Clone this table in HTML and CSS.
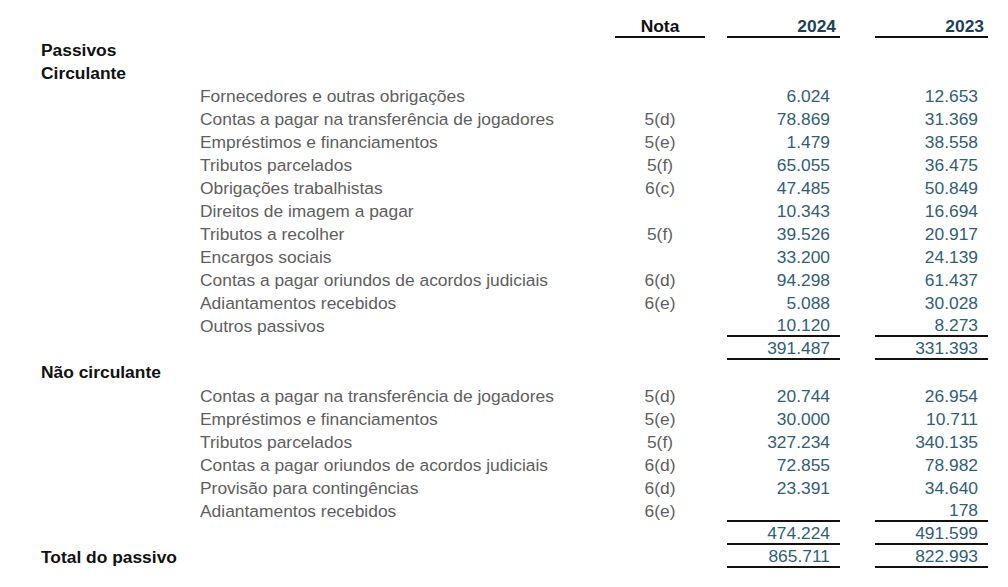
FILE: index.html
```html
<!DOCTYPE html>
<html lang="pt-BR">
<head>
<meta charset="utf-8">
<title>Passivos</title>
<link rel="stylesheet" href="styles.css">
</head>
<body>
<div class="sheet">
  <div class="row head">
    <div class="label"></div>
    <div class="nota ul">Nota</div>
    <div class="val v1 ul year">2024</div>
    <div class="val v2 ul year">2023</div>
  </div>
  <div class="row"><div class="label sec">Passivos</div></div>
  <div class="row"><div class="label sec">Circulante</div></div>
  <div class="row"><div class="label item">Fornecedores e outras obrigações</div><div class="nota"></div><div class="val v1">6.024</div><div class="val v2">12.653</div></div>
  <div class="row"><div class="label item">Contas a pagar na transferência de jogadores</div><div class="nota">5(d)</div><div class="val v1">78.869</div><div class="val v2">31.369</div></div>
  <div class="row"><div class="label item">Empréstimos e financiamentos</div><div class="nota">5(e)</div><div class="val v1">1.479</div><div class="val v2">38.558</div></div>
  <div class="row"><div class="label item">Tributos parcelados</div><div class="nota">5(f)</div><div class="val v1">65.055</div><div class="val v2">36.475</div></div>
  <div class="row"><div class="label item">Obrigações trabalhistas</div><div class="nota">6(c)</div><div class="val v1">47.485</div><div class="val v2">50.849</div></div>
  <div class="row"><div class="label item">Direitos de imagem a pagar</div><div class="nota"></div><div class="val v1">10.343</div><div class="val v2">16.694</div></div>
  <div class="row"><div class="label item">Tributos a recolher</div><div class="nota">5(f)</div><div class="val v1">39.526</div><div class="val v2">20.917</div></div>
  <div class="row"><div class="label item">Encargos sociais</div><div class="nota"></div><div class="val v1">33.200</div><div class="val v2">24.139</div></div>
  <div class="row"><div class="label item">Contas a pagar oriundos de acordos judiciais</div><div class="nota">6(d)</div><div class="val v1">94.298</div><div class="val v2">61.437</div></div>
  <div class="row"><div class="label item">Adiantamentos recebidos</div><div class="nota">6(e)</div><div class="val v1">5.088</div><div class="val v2">30.028</div></div>
  <div class="row"><div class="label item">Outros passivos</div><div class="nota"></div><div class="val v1 ul">10.120</div><div class="val v2 ul">8.273</div></div>
  <div class="row"><div class="label"></div><div class="nota"></div><div class="val v1 ul">391.487</div><div class="val v2 ul">331.393</div></div>
  <div class="row section"><div class="label sec">Não circulante</div></div>
  <div class="row"><div class="label item">Contas a pagar na transferência de jogadores</div><div class="nota">5(d)</div><div class="val v1">20.744</div><div class="val v2">26.954</div></div>
  <div class="row"><div class="label item">Empréstimos e financiamentos</div><div class="nota">5(e)</div><div class="val v1">30.000</div><div class="val v2">10.711</div></div>
  <div class="row"><div class="label item">Tributos parcelados</div><div class="nota">5(f)</div><div class="val v1">327.234</div><div class="val v2">340.135</div></div>
  <div class="row"><div class="label item">Contas a pagar oriundos de acordos judiciais</div><div class="nota">6(d)</div><div class="val v1">72.855</div><div class="val v2">78.982</div></div>
  <div class="row"><div class="label item">Provisão para contingências</div><div class="nota">6(d)</div><div class="val v1">23.391</div><div class="val v2">34.640</div></div>
  <div class="row"><div class="label item">Adiantamentos recebidos</div><div class="nota">6(e)</div><div class="val v1 ul"></div><div class="val v2 ul">178</div></div>
  <div class="row"><div class="label"></div><div class="nota"></div><div class="val v1 ul">474.224</div><div class="val v2 ul">491.599</div></div>
  <div class="row"><div class="label sec">Total do passivo</div><div class="nota"></div><div class="val v1 ul">865.711</div><div class="val v2 ul">822.993</div></div>
</div>
</body>
</html>
```

FILE: styles.css
```css
html, body {
  margin: 0;
  padding: 0;
  background: #ffffff;
}

body {
  font-family: "Liberation Sans", Arial, sans-serif;
  font-size: 17.4px;
}

.sheet {
  padding: 15px 0 0 41px;
  display: flex;
  flex-direction: column;
}

.row {
  display: flex;
  height: 23px;
  line-height: 24px;
}

.row.section {
  height: 24px;
}

.row > div {
  box-sizing: border-box;
  height: 23px;
  white-space: nowrap;
}

.label {
  flex: 0 0 574px;
  color: #5e5e5e;
}

.label.sec {
  color: #111111;
  font-weight: bold;
}

.label.item {
  padding-left: 159px;
}

.nota {
  flex: 0 0 90px;
  text-align: center;
  color: #5e5e5e;
}

.head .nota {
  color: #111111;
  font-weight: bold;
}

.val {
  flex: 0 0 113px;
  text-align: right;
  padding-right: 10px;
  color: #315e76;
}

.v1 {
  margin-left: 22px;
}

.v2 {
  margin-left: 35px;
}

.val.year {
  color: #1c4154;
  font-weight: bold;
  padding-right: 4px;
}

.ul {
  border-bottom: 2px solid #111111;
  line-height: 23px;
}
```
